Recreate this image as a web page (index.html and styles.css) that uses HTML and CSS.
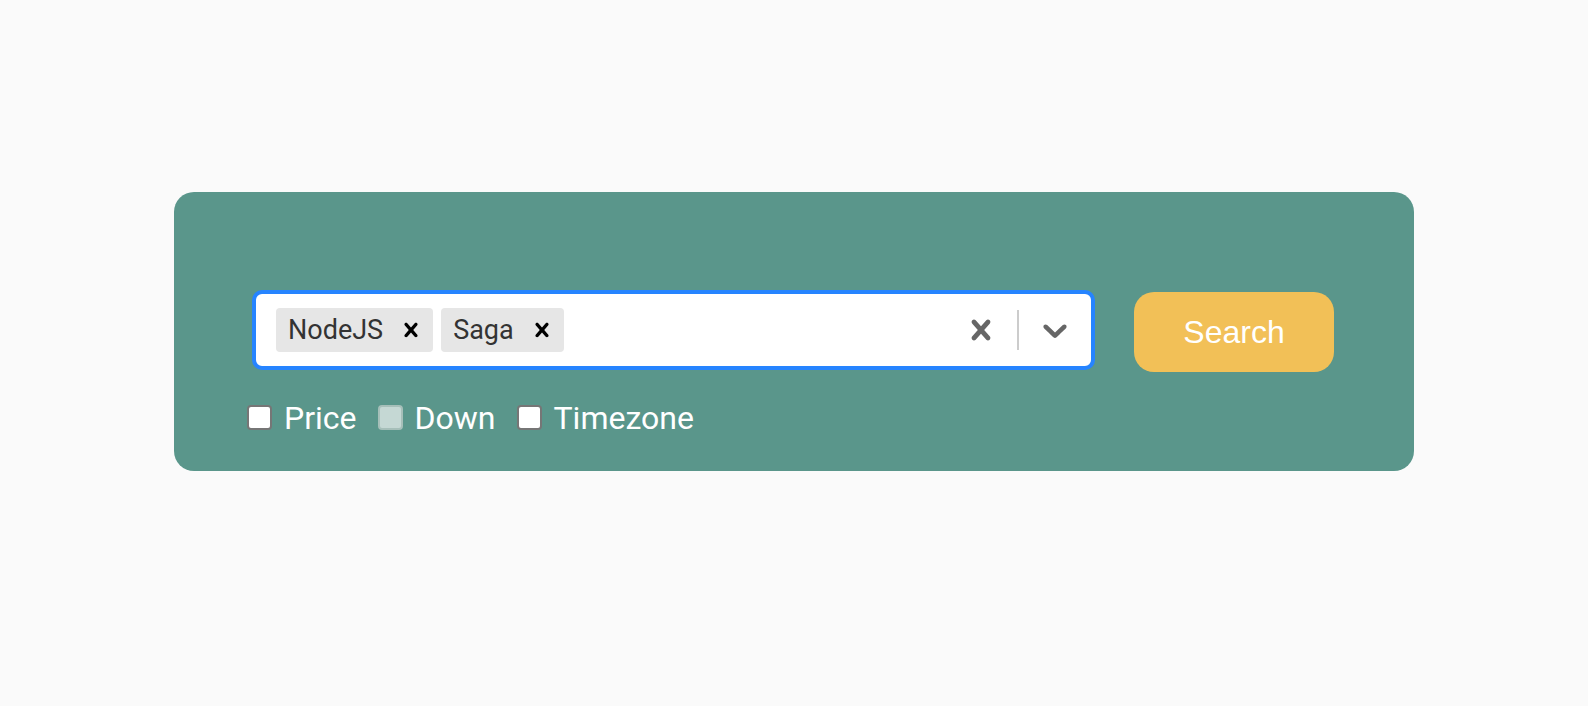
FILE: index.html
```html
<!DOCTYPE html>
<html lang="en">
<head>
<meta charset="utf-8">
<title>Search</title>
<link rel="stylesheet" href="styles.css">
</head>
<body>
<div class="page">
  <div class="card">
    <div class="search-row">
      <div class="select">
        <div class="value-container">
          <div class="tag">
            <span class="tag-label">NodeJS</span>
            <span class="tag-remove"><svg viewBox="0 0 20 20" width="28" height="28"><path d="M14.348 14.849c-0.469 0.469-1.229 0.469-1.697 0l-2.651-3.030-2.651 3.029c-0.469 0.469-1.229 0.469-1.697 0-0.469-0.469-0.469-1.229 0-1.697l2.758-3.150-2.759-3.152c-0.469-0.469-0.469-1.228 0-1.697s1.228-0.469 1.697 0l2.652 3.031 2.651-3.031c0.469-0.469 1.228-0.469 1.697 0s0.469 1.229 0 1.697l-2.758 3.152 2.758 3.150c0.469 0.469 0.469 1.229 0 1.698z"/></svg></span>
          </div>
          <div class="tag">
            <span class="tag-label">Saga</span>
            <span class="tag-remove"><svg viewBox="0 0 20 20" width="28" height="28"><path d="M14.348 14.849c-0.469 0.469-1.229 0.469-1.697 0l-2.651-3.030-2.651 3.029c-0.469 0.469-1.229 0.469-1.697 0-0.469-0.469-0.469-1.229 0-1.697l2.758-3.150-2.759-3.152c-0.469-0.469-0.469-1.228 0-1.697s1.228-0.469 1.697 0l2.652 3.031 2.651-3.031c0.469-0.469 1.228-0.469 1.697 0s0.469 1.229 0 1.697l-2.758 3.152 2.758 3.150c0.469 0.469 0.469 1.229 0 1.698z"/></svg></span>
          </div>
        </div>
        <div class="indicators">
          <span class="indicator"><svg viewBox="0 0 20 20" width="40" height="40"><path d="M14.348 14.849c-0.469 0.469-1.229 0.469-1.697 0l-2.651-3.030-2.651 3.029c-0.469 0.469-1.229 0.469-1.697 0-0.469-0.469-0.469-1.229 0-1.697l2.758-3.150-2.759-3.152c-0.469-0.469-0.469-1.228 0-1.697s1.228-0.469 1.697 0l2.652 3.031 2.651-3.031c0.469-0.469 1.228-0.469 1.697 0s0.469 1.229 0 1.697l-2.758 3.152 2.758 3.150c0.469 0.469 0.469 1.229 0 1.698z"/></svg></span>
          <span class="separator"></span>
          <span class="indicator"><svg viewBox="0 0 20 20" width="40" height="40"><path d="M4.516 7.548c0.436-0.446 1.043-0.481 1.576 0l3.908 3.747 3.908-3.747c0.533-0.481 1.141-0.446 1.574 0 0.436 0.445 0.408 1.197 0 1.615-0.406 0.418-4.695 4.502-4.695 4.502-0.217 0.223-0.502 0.335-0.787 0.335s-0.57-0.112-0.789-0.335c0 0-4.287-4.084-4.695-4.502s-0.436-1.170 0-1.615z"/></svg></span>
        </div>
      </div>
      <button class="search-btn" type="button">Search</button>
    </div>
    <div class="options">
      <label class="opt"><input type="checkbox" class="box"><span>Price</span></label>
      <label class="opt"><input type="checkbox" class="box" disabled><span>Down</span></label>
      <label class="opt"><input type="checkbox" class="box"><span>Timezone</span></label>
    </div>
  </div>
</div>
</body>
</html>
```

FILE: styles.css
```css
* { box-sizing: border-box; }
html, body { margin: 0; padding: 0; }
body {
  background: #fafafa;
  font-family: Roboto, "Liberation Sans", sans-serif;
}
.page {
  padding-top: 192px;
}
.card {
  width: 1240px;
  margin: 0 auto;
  height: 279px;
  background: #5a968b;
  border-radius: 20px;
  padding: 100px 80px 0 80px;
}
.search-row {
  display: flex;
  align-items: flex-start;
  gap: 41px;
}
.select {
  flex: 1;
  min-height: 76px;
  background: #fff;
  border: 2px solid #2684ff;
  box-shadow: 0 0 0 2px #2684ff;
  border-radius: 8px;
  display: flex;
  align-items: center;
}
.value-container {
  flex: 1;
  display: flex;
  flex-wrap: wrap;
  align-items: center;
  padding: 4px 16px;
}
.tag {
  display: flex;
  background: #e6e6e6;
  border-radius: 4px;
  margin: 4px;
}
.tag-label {
  color: #333;
  font-size: 27px;
  padding: 6px 6px 6px 12px;
  white-space: nowrap;
}
.tag-remove {
  display: flex;
  align-items: center;
  padding: 0 8px;
  border-radius: 4px;
}
.tag-remove svg { fill: #000; display: block; }
.indicators {
  display: flex;
  align-self: stretch;
  align-items: center;
}
.indicator {
  display: flex;
  padding: 16px;
}
.indicator svg { fill: #666; display: block; }
.separator {
  align-self: stretch;
  width: 2px;
  background: #ccc;
  margin: 16px 0;
}
.search-btn {
  width: 200px;
  height: 80px;
  border: none;
  border-radius: 20px;
  background: #f2c057;
  color: #fff;
  font-family: "Liberation Sans", Arial, sans-serif;
  font-size: 32px;
  padding: 0;
}
.options {
  display: flex;
  align-items: center;
  gap: 21px;
  margin-top: 27px;
  margin-left: -7px;
}
.opt {
  display: flex;
  align-items: center;
  gap: 12px;
  color: #fff;
  font-size: 32px;
}
.box {
  appearance: none;
  -webkit-appearance: none;
  width: 25px;
  height: 25px;
  margin: 0 0 1px 0;
  border: 2px solid #767676;
  border-radius: 4px;
  background: #fff;
}
.box:disabled {
  background: #c5d8d4;
  border-color: #a6bfb9;
}
```
